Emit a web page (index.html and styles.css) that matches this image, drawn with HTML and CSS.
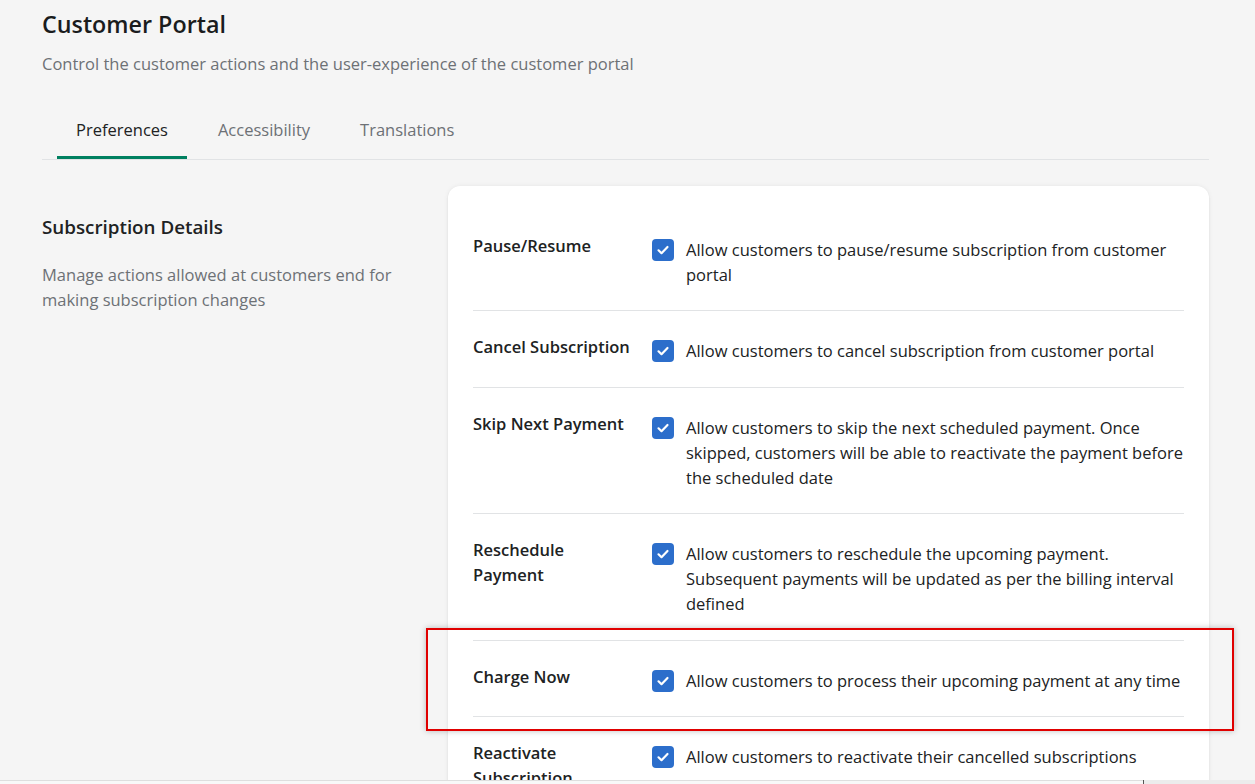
FILE: index.html
```html
<!DOCTYPE html>
<html lang="en">
<head>
    <meta charset="UTF-8">
    <meta name="viewport" content="width=device-width, initial-scale=1.0">
    <title>Customer Portal</title>
    <link rel="stylesheet" href="styles.css">
</head>
<body>
    <div class="page">
        <header class="page-header">
            <h1>Customer Portal</h1>
            <p>Control the customer actions and the user-experience of the customer portal</p>
        </header>

        <nav class="tabs">
            <div class="tab active">Preferences</div>
            <div class="tab">Accessibility</div>
            <div class="tab">Translations</div>
        </nav>

        <section class="layout">
            <div class="section-info">
                <h2>Subscription Details</h2>
                <p>Manage actions allowed at customers end for making subscription changes</p>
            </div>

            <div class="card">
                <div class="setting-row">
                    <div class="setting-label">Pause/Resume</div>
                    <label class="setting-check">
                        <span class="checkbox"><svg viewBox="0 0 22 22"><path d="M6.5 11.3l3 2.9 6-6.2"/></svg></span>
                        <span>Allow customers to pause/resume subscription from customer portal</span>
                    </label>
                </div>
                <div class="setting-row">
                    <div class="setting-label">Cancel Subscription</div>
                    <label class="setting-check">
                        <span class="checkbox"><svg viewBox="0 0 22 22"><path d="M6.5 11.3l3 2.9 6-6.2"/></svg></span>
                        <span>Allow customers to cancel subscription from customer portal</span>
                    </label>
                </div>
                <div class="setting-row">
                    <div class="setting-label">Skip Next Payment</div>
                    <label class="setting-check">
                        <span class="checkbox"><svg viewBox="0 0 22 22"><path d="M6.5 11.3l3 2.9 6-6.2"/></svg></span>
                        <span>Allow customers to skip the next scheduled payment. Once skipped, customers will be able to reactivate the payment before the scheduled date</span>
                    </label>
                </div>
                <div class="setting-row">
                    <div class="setting-label">Reschedule Payment</div>
                    <label class="setting-check">
                        <span class="checkbox"><svg viewBox="0 0 22 22"><path d="M6.5 11.3l3 2.9 6-6.2"/></svg></span>
                        <span>Allow customers to reschedule the upcoming payment. Subsequent payments will be updated as per the billing interval defined</span>
                    </label>
                </div>
                <div class="setting-row">
                    <div class="setting-label">Charge Now</div>
                    <label class="setting-check">
                        <span class="checkbox"><svg viewBox="0 0 22 22"><path d="M6.5 11.3l3 2.9 6-6.2"/></svg></span>
                        <span>Allow customers to process their upcoming payment at any time</span>
                    </label>
                </div>
                <div class="setting-row">
                    <div class="setting-label">Reactivate Subscription</div>
                    <label class="setting-check">
                        <span class="checkbox"><svg viewBox="0 0 22 22"><path d="M6.5 11.3l3 2.9 6-6.2"/></svg></span>
                        <span>Allow customers to reactivate their cancelled subscriptions</span>
                    </label>
                </div>
            </div>
        </section>
    </div>

    <!-- annotation box from the screenshot -->
    <div class="highlight"></div>

    <div class="hscroll">
        <div class="hscroll-track"></div>
        <div class="hscroll-corner"></div>
    </div>
</body>
</html>
```

FILE: styles.css
```css
html, body {
    overflow: hidden;
}

body {
    font-family: "Open Sans", "Noto Sans", sans-serif;
    font-size: 16.5px;
    line-height: 25px;
    margin: 0;
    background-color: #f5f5f5;
    color: #202223;
}

.page {
    padding: 8px 46px 0 42px;
}

.page-header h1 {
    margin: 0;
    font-size: 23.3px;
    line-height: 32px;
    font-weight: 600;
    color: #1a1c1d;
}

.page-header p {
    margin: 11px 0 0;
    color: #6d7175;
}

.tabs {
    display: flex;
    gap: 12px;
    margin-top: 23px;
    padding-left: 15px;
    border-bottom: 1px solid #e1e3e5;
}

.tab {
    padding: 18px 19px 14px;
    border-bottom: 3px solid transparent;
    color: #6d7175;
    cursor: pointer;
}

.tab.active {
    color: #202223;
    border-bottom-color: #008060;
}

.layout {
    display: grid;
    grid-template-columns: 380px 1fr;
    column-gap: 26px;
    margin-top: 26px;
}

.section-info {
    padding-top: 29px;
}

.section-info h2 {
    margin: 0;
    font-size: 18.8px;
    line-height: 25px;
    font-weight: 600;
    color: #202223;
}

.section-info p {
    margin: 22px 0 0;
    color: #6d7175;
}

.card {
    background-color: white;
    border-radius: 12px;
    padding: 0.5px 25px 40px;
    box-shadow: 0 0 5px rgba(0, 0, 0, 0.06), 0 1px 2px rgba(0, 0, 0, 0.08);
}

.setting-row {
    display: grid;
    grid-template-columns: 160px 1fr;
    column-gap: 19px;
    padding: 23px 0 23.5px;
}

.setting-row:first-child {
    padding-top: 46px;
}

.setting-row + .setting-row {
    border-top: 1px solid #e1e3e5;
}

.setting-label {
    font-weight: 600;
    color: #202223;
}

.setting-check {
    display: flex;
    gap: 12px;
    padding-top: 4px;
    cursor: pointer;
}

.checkbox {
    flex: none;
    width: 22px;
    height: 22px;
    margin-top: 2px;
    border-radius: 4px;
    background-color: #2c6ecb;
}

.checkbox svg {
    display: block;
    width: 22px;
    height: 22px;
}

.checkbox path {
    fill: none;
    stroke: white;
    stroke-width: 2.2;
    stroke-linecap: round;
    stroke-linejoin: round;
}

.highlight {
    position: absolute;
    left: 426px;
    top: 628px;
    width: 804px;
    height: 99px;
    border: 2px solid #e00000;
    box-shadow: 0 0 6px rgba(0, 0, 0, 0.25);
    pointer-events: none;
}

.hscroll {
    position: fixed;
    left: 0;
    right: 0;
    bottom: 0;
    height: 4px;
    display: flex;
}

.hscroll-track {
    flex: 1;
    background-color: #f8f8f8;
    border-top: 1px solid #dedede;
}

.hscroll-corner {
    width: 111px;
    background-color: #ececec;
    border-left: 1px solid #555;
}
```
